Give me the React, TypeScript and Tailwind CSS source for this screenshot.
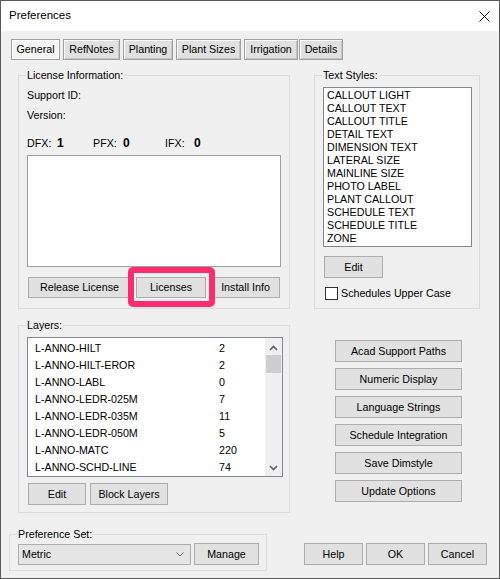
import React from 'react'

const layers: [string, string][] = [
  ['L-ANNO-HILT', '2'],
  ['L-ANNO-HILT-EROR', '2'],
  ['L-ANNO-LABL', '0'],
  ['L-ANNO-LEDR-025M', '7'],
  ['L-ANNO-LEDR-035M', '11'],
  ['L-ANNO-LEDR-050M', '5'],
  ['L-ANNO-MATC', '220'],
  ['L-ANNO-SCHD-LINE', '74'],
]

const textStyles = [
  'CALLOUT LIGHT',
  'CALLOUT TEXT',
  'CALLOUT TITLE',
  'DETAIL TEXT',
  'DIMENSION TEXT',
  'LATERAL SIZE',
  'MAINLINE SIZE',
  'PHOTO LABEL',
  'PLANT CALLOUT',
  'SCHEDULE TEXT',
  'SCHEDULE TITLE',
  'ZONE',
]

const tabs = [
  { label: 'General', cls: 'w-[49px]', active: true },
  { label: 'RefNotes', cls: 'w-[57px] ml-[3px]' },
  { label: 'Planting', cls: 'w-[50px] ml-[3px]' },
  { label: 'Plant Sizes', cls: 'w-[65px] ml-[3px]' },
  { label: 'Irrigation', cls: 'w-[54px] ml-[3px]' },
  { label: 'Details', cls: 'w-[44px] ml-[1px]' },
]

const sideButtons = [
  'Acad Support Paths',
  'Numeric Display',
  'Language Strings',
  'Schedule Integration',
  'Save Dimstyle',
  'Update Options',
]

function Btn({ className = '', children }: { className?: string; children: React.ReactNode }) {
  return (
    <div
      className={`flex items-center justify-center shrink-0 bg-[#e1e1e1] border border-[#adadad] text-[10.7px] leading-none whitespace-nowrap ${className}`}
    >
      {children}
    </div>
  )
}

function Group({ label, className = '', children }: { label: string; className?: string; children: React.ReactNode }) {
  return (
    <fieldset className={`border border-[#dcdcdc] shrink-0 min-w-0 ${className}`}>
      <legend className="ml-[7px] px-[1px] leading-[13px] text-[10.7px]">{label}</legend>
      {children}
    </fieldset>
  )
}

function Chevron({ up }: { up?: boolean }) {
  return (
    <svg width="9" height="6" viewBox="0 0 9 6">
      <path
        d={up ? 'M1 5 L4.5 1.5 L8 5' : 'M1 1 L4.5 4.5 L8 1'}
        fill="none"
        stroke="#606060"
        strokeWidth="1.6"
      />
    </svg>
  )
}

export default function App() {
  return (
    <div className="w-[500px] h-[579px] border border-[#5a5a5a] bg-[#f0f0f0] flex flex-col text-black font-['Liberation_Sans',Arial,sans-serif] text-[10.7px] overflow-hidden">
      {/* Title bar */}
      <div className="h-[30px] bg-white flex items-center justify-between pl-[8px] pr-[9px] shrink-0">
        <span className="text-[11.5px]">Preferences</span>
        <svg width="11" height="11" viewBox="0 0 11 11">
          <path d="M0.5 0.5 L10.5 10.5 M10.5 0.5 L0.5 10.5" stroke="#111" strokeWidth="1" />
        </svg>
      </div>

      {/* Tabs */}
      <div className="flex pl-[10px] pt-[8px]">
        {tabs.map((t) => (
          <div
            key={t.label}
            className={`h-[21px] flex items-center justify-center border border-[#a0a0a0] text-[10.7px] ${t.cls} ${
              t.active
                ? 'bg-[#f4f4f4] shadow-[inset_1px_1px_0_#fff,inset_-1px_-1px_0_#fff]'
                : 'bg-[#e1e1e1] shadow-[inset_1px_1px_0_#fdfdfd,inset_-1px_-1px_0_#c4c4c4]'
            }`}
          >
            {t.label}
          </div>
        ))}
      </div>

      {/* Row 1 */}
      <div className="flex mt-[9px] pl-[17px]">
        <Group label="License Information:" className="w-[272px] h-[240px]">
          <div className="pl-[8px] pt-[7px] flex flex-col">
            <div className="leading-[13px]">Support ID:</div>
            <div className="leading-[13px] mt-[7px]">Version:</div>
            <div className="flex items-center h-[13px] mt-[15px] leading-[13px]">
              <span className="w-[30px]">DFX:</span>
              <span className="w-[36px] font-bold text-[12px]">1</span>
              <span className="w-[30px]">PFX:</span>
              <span className="w-[42px] font-bold text-[12px]">0</span>
              <span className="w-[29px]">IFX:</span>
              <span className="font-bold text-[12px]">0</span>
            </div>
            <div className="w-[254px] h-[112px] mt-[5px] bg-white border border-[#a0a0a0]" />
            <div className="flex mt-[10px]">
              <Btn className="ml-[1px] w-[103px] h-[21px]">Release License</Btn>
              <div className="relative ml-[5px]">
                <Btn className="w-[70px] h-[21px]">Licenses</Btn>
                <span className="absolute -left-[8px] -right-[9px] -top-[10px] -bottom-[9px] border-[6px] border-[#fb2d6e] rounded-[5px] z-10" />
              </div>
              <Btn className="ml-[5px] w-[69px] h-[21px]">Install Info</Btn>
            </div>
          </div>
        </Group>

        <Group label="Text Styles:" className="ml-[24px] w-[166px] h-[240px]">
          <div className="flex flex-col">
            <div className="ml-[8px] mt-[5px] w-[149px] h-[160px] bg-white border border-[#828790] pt-[1px] pl-[3px]">
              {textStyles.map((s) => (
                <div key={s} className="leading-[13px] whitespace-nowrap">
                  {s}
                </div>
              ))}
            </div>
            <Btn className="ml-[9px] mt-[9px] w-[59px] h-[22px]">Edit</Btn>
            <div className="flex items-center mt-[9px] ml-[10px]">
              <span className="w-[13px] h-[13px] bg-white border border-[#333]" />
              <span className="ml-[3px] leading-[13px]">Schedules Upper Case</span>
            </div>
          </div>
        </Group>
      </div>

      {/* Row 2 */}
      <div className="flex mt-[10px] pl-[17px]">
        <Group label="Layers:" className="w-[272px] h-[194px]">
          <div className="flex flex-col">
            <div className="ml-[8px] mt-[5px] w-[256px] h-[140px] bg-white border border-[#828790] flex">
              <div className="flex-1 pt-[2px]">
                {layers.map(([name, n]) => (
                  <div key={name} className="h-[17px] flex items-center pl-[7px]">
                    <span className="w-[184px]">{name}</span>
                    <span>{n}</span>
                  </div>
                ))}
              </div>
              <div className="w-[17px] bg-[#f0f0f0] flex flex-col">
                <div className="h-[17px] flex items-center justify-center pt-[3px]">
                  <Chevron up />
                </div>
                <div className="h-[18px] mx-[1px] bg-[#cdcdcd]" />
                <div className="flex-1" />
                <div className="h-[17px] flex items-center justify-center">
                  <Chevron />
                </div>
              </div>
            </div>
            <div className="flex mt-[6px]">
              <Btn className="ml-[9px] w-[58px] h-[22px]">Edit</Btn>
              <Btn className="ml-[4px] w-[78px] h-[22px]">Block Layers</Btn>
            </div>
          </div>
        </Group>

        <div className="flex flex-col gap-[6px] ml-[45px] mt-[21px]">
          {sideButtons.map((b) => (
            <Btn key={b} className="w-[127px] h-[22px]">
              {b}
            </Btn>
          ))}
        </div>
      </div>

      {/* Row 3 */}
      <div className="flex items-start mt-[15px] pl-[8px]">
        <Group label="Preference Set:" className="w-[258px] h-[43px]">
          <div className="flex items-center mt-[2px] ml-[8px]">
            <div className="w-[173px] h-[21px] bg-[#e5e5e5] border border-[#adadad] flex items-center justify-between pl-[3px] pr-[6px]">
              <span>Metric</span>
              <svg width="8" height="5" viewBox="0 0 8 5">
                <path d="M0.5 0.5 L4 4 L7.5 0.5" fill="none" stroke="#666" strokeWidth="1" />
              </svg>
            </div>
            <Btn className="ml-[3px] w-[65px] h-[22px]">Manage</Btn>
          </div>
        </Group>
        <div className="flex gap-[3px] ml-[37px] mt-[15px]">
          <Btn className="w-[59px] h-[22px]">Help</Btn>
          <Btn className="w-[59px] h-[22px]">OK</Btn>
          <Btn className="w-[59px] h-[22px]">Cancel</Btn>
        </div>
      </div>
    </div>
  )
}
